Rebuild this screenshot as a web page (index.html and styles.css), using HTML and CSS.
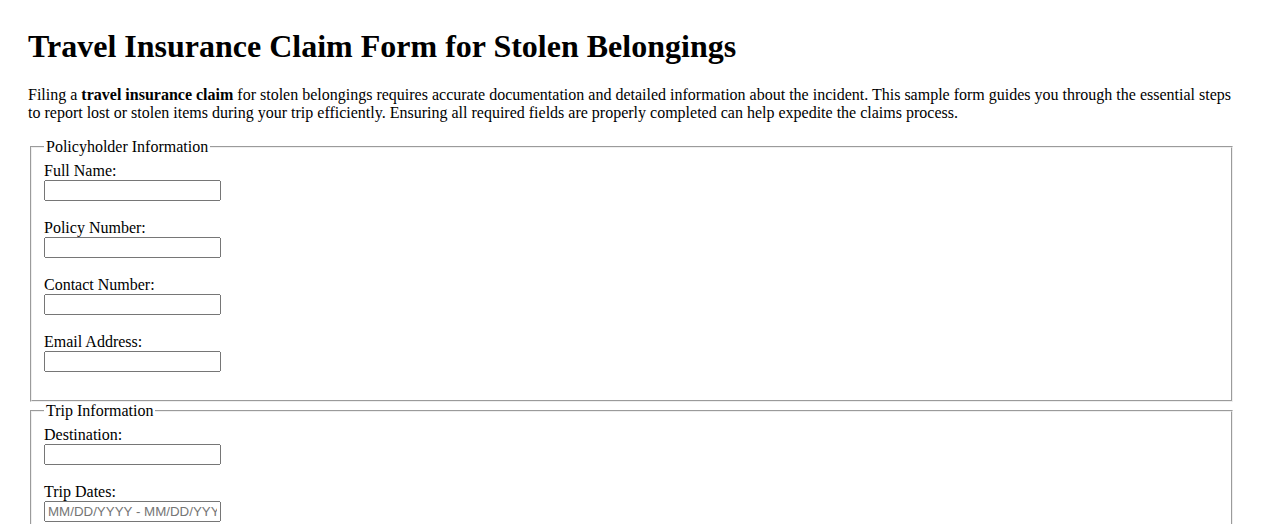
FILE: index.html
```html
<!DOCTYPE html>
<html lang="en">
<head>
<meta charset="UTF-8">
<meta name="viewport" content="width=device-width, initial-scale=1.0">
<title>Travel Insurance Claim Form for Stolen Belongings</title>
<link rel="stylesheet" href="styles.css">
</head>
<body>
<h1>Travel Insurance Claim Form for Stolen Belongings</h1>
<p>Filing a <strong>travel insurance claim</strong> for stolen belongings requires accurate documentation and detailed information about the incident. This sample form guides you through the essential steps to report lost or stolen items during your trip efficiently. Ensuring all required fields are properly completed can help expedite the claims process.</p>
<form>
  <fieldset>
    <legend>Policyholder Information</legend>
    <label for="fullName">Full Name:</label><br>
    <input type="text" id="fullName" name="fullName"><br><br>
    <label for="policyNumber">Policy Number:</label><br>
    <input type="text" id="policyNumber" name="policyNumber"><br><br>
    <label for="contactNumber">Contact Number:</label><br>
    <input type="tel" id="contactNumber" name="contactNumber"><br><br>
    <label for="email">Email Address:</label><br>
    <input type="email" id="email" name="email"><br><br>
  </fieldset>
  <fieldset>
    <legend>Trip Information</legend>
    <label for="destination">Destination:</label><br>
    <input type="text" id="destination" name="destination"><br><br>
    <label for="tripDates">Trip Dates:</label><br>
    <input type="text" id="tripDates" name="tripDates" placeholder="MM/DD/YYYY - MM/DD/YYYY"><br><br>
    <label for="incidentDate">Date of Incident:</label><br>
    <input type="text" id="incidentDate" name="incidentDate" placeholder="MM/DD/YYYY"><br><br>
  </fieldset>
</form>
</body>
</html>
```

FILE: styles.css
```css
body {
  margin: 8px;
  padding: 20px;
  font-family: "Liberation Serif", "Times New Roman", serif;
  font-size: 16px;
  color: #000;
  background: #fff;
}
h1 {
  margin-top: 0;
  font-size: 32px;
}
input {
  width: 177px;
  box-sizing: border-box;
  font-family: "Liberation Sans", Arial, sans-serif;
}
```
